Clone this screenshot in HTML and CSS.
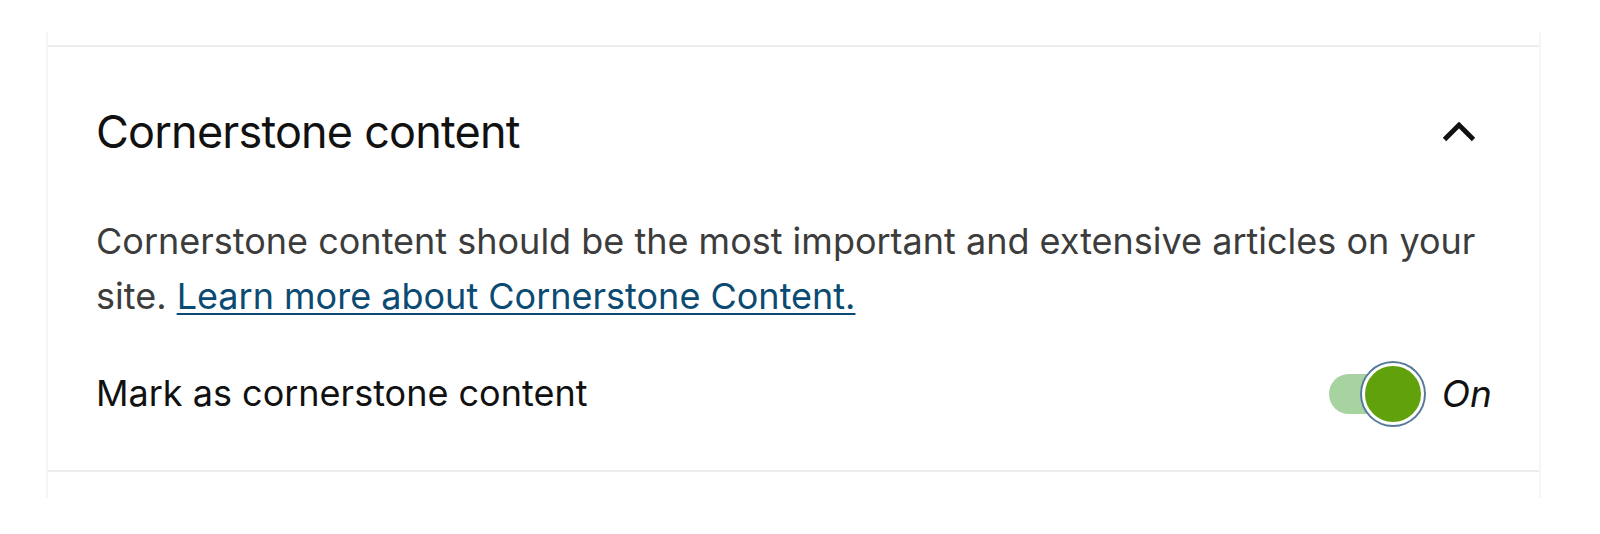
FILE: index.html
```html
<!DOCTYPE html>
<html lang="en">
<head>
  <meta charset="UTF-8" />
  <meta name="viewport" content="width=device-width, initial-scale=1.0" />
  <title>Cornerstone content</title>
  <link rel="stylesheet" href="styles.css">
</head>
<body>
  <div class="sidebar">
    <section class="panel">
      <div class="panel-head">
        <h2 class="panel-title">Cornerstone content</h2>
        <button class="collapse-btn" title="Collapse">
          <svg class="chevron" viewBox="0 0 34 20">
            <path d="M2.5 17.5L17 3l14.5 14.5"/>
          </svg>
        </button>
      </div>
      <p class="panel-text">Cornerstone content should be the most important and extensive articles on your site. <a href="#">Learn more about Cornerstone Content.</a></p>
      <div class="toggle-row">
        <span class="toggle-label">Mark as cornerstone content</span>
        <div class="toggle-wrap">
          <span class="toggle" role="switch" aria-checked="true">
            <span class="toggle-track"></span>
            <span class="toggle-knob"></span>
          </span>
          <span class="toggle-state">On</span>
        </div>
      </div>
    </section>
  </div>
</body>
</html>
```

FILE: styles.css
```css
* { box-sizing: border-box; margin: 0; padding: 0; }
body {
  background: #fff;
  font-family: Inter, 'Liberation Sans', sans-serif;
  color: #1e1e1e;
  height: 534px; overflow: hidden;
}
.sidebar {
  margin: 32px 0 0 46px;
  width: 1495px; height: 466px;
  border-left: 2px solid #f5f5f5;
  border-right: 2px solid #f5f5f5;
  padding-top: 13px;
}
.panel {
  border-top: 2px solid #ededed;
  border-bottom: 2px solid #ededed;
  padding: 57px 47px 49px 48px;
}
.panel-head {
  display: flex; align-items: center; justify-content: space-between;
}
.panel-title {
  font-size: 45px; font-weight: 400; line-height: 56px;
  letter-spacing: -0.8px;
  color: #111;
}
.collapse-btn {
  background: none; border: none; cursor: pointer;
  width: 50px; height: 40px;
  display: flex; align-items: center; justify-content: flex-start;
}
.chevron {
  width: 34px; height: 20px;
  fill: none; stroke: #111; stroke-width: 4.8;
}
.panel-text {
  margin-top: 54px;
  font-size: 36px; line-height: 55px;
  color: #3c3c3c;
}
.panel-text a {
  color: #0b4a72; text-decoration: underline;
  text-underline-offset: 4px; text-decoration-thickness: 2px;
}
.toggle-row {
  margin-top: 42px;
  display: flex; align-items: center; justify-content: space-between;
  height: 55px;
}
.toggle-label {
  font-size: 36px; line-height: 55px; color: #111;
}
.toggle-wrap {
  display: flex; align-items: center; gap: 18px;
}
.toggle {
  position: relative; display: block;
  width: 95px; height: 62px;
}
.toggle-track {
  position: absolute; left: 0; top: 11px;
  width: 80px; height: 40px; border-radius: 20px;
  background: #a6d3a0;
}
.toggle-knob {
  position: absolute; right: 0; top: 0;
  width: 62px; height: 62px; border-radius: 50%;
  background: #61a20c;
  border: 3px solid #fff;
  box-shadow: 0 0 0 2px #56789a;
}
.toggle-state {
  font-size: 37px; font-style: italic; line-height: 55px; color: #111;
}
```
